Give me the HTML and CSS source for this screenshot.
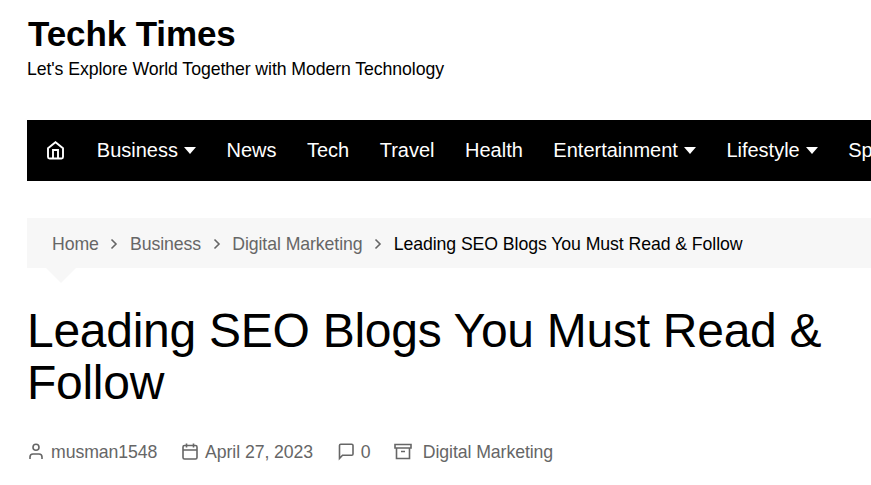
FILE: index.html
```html
<!DOCTYPE html>
<html lang="en">
<head>
<meta charset="utf-8">
<title>Techk Times</title>
<link rel="stylesheet" href="styles.css">
</head>
<body>
<header class="site-header">
  <div class="site-title">Techk Times</div>
  <div class="tagline">Let's Explore World Together with Modern Technology</div>
</header>
<nav class="main-nav">
  <a class="home"><svg width="20" height="20" viewBox="0 0 20 20"><path d="M2 7.200 9.500 1.200l7.500 6v8.800q0 1.500-1.500 1.500h-12q-1.500 0-1.500-1.500zM7 17V9h5v8"/></svg></a>
  <a>Business<i class="caret"></i></a>
  <a>News</a>
  <a>Tech</a>
  <a>Travel</a>
  <a>Health</a>
  <a>Entertainment<i class="caret"></i></a>
  <a>Lifestyle<i class="caret"></i></a>
  <a>Sports</a>
</nav>
<main>
  <div class="breadcrumb">
    <a>Home</a><svg class="sep" viewBox="0 0 8 12"><path d="m1.500 1.500 4.500 4.500-4.500 4.500"/></svg><a>Business</a><svg class="sep" viewBox="0 0 8 12"><path d="m1.500 1.500 4.500 4.500-4.500 4.500"/></svg><a>Digital Marketing</a><svg class="sep" viewBox="0 0 8 12"><path d="m1.500 1.500 4.500 4.500-4.500 4.500"/></svg><span>Leading SEO Blogs You Must Read &amp; Follow</span>
  </div>
  <h1>Leading SEO Blogs You Must Read &amp; Follow</h1>
  <div class="meta">
    <span class="author"><svg viewBox="0 0 18 18"><circle cx="9" cy="4.200" r="3"/><path d="M3 16v-2q0-3 3-3h6q3 0 3 3v2"/></svg>musman1548</span>
    <span class="date"><svg viewBox="0 0 18 18"><rect x="2" y="2.500" width="14" height="13.500" rx="1.500"/><path d="M2 7h14M5.500 .5v4M12.500 .5v4"/></svg>April 27, 2023</span>
    <span class="comments"><svg viewBox="0 0 18 18"><path d="M2.500 15.500V2.500q0-1.300 1.300-1.300h10.900q1.300 0 1.300 1.300v8.500q0 1.300-1.300 1.300H5.500z"/></svg>0</span>
    <span class="category"><svg viewBox="0 0 18 18"><path d="M1 1.500h16V5H1zM2.500 5v10.500h13V5M7 8.500h4"/></svg>Digital Marketing</span>
  </div>
</main>
</body>
</html>
```
FILE: styles.css
```css
* { box-sizing: border-box; }
body {
  margin: 0;
  padding: 14px 0 0 27px;
  height: 485px;
  overflow: hidden;
  background: #fff;
  color: #000;
  font-family: "Liberation Sans", Arial, sans-serif;
}
svg { fill: none; stroke: currentColor; flex: none; }
.site-header { height: 106px; }
.site-title { font-size: 35px; font-weight: 700; line-height: 40px; padding-left: 1px; letter-spacing: -0.1px; }
.tagline { font-size: 17.7px; line-height: 30px; letter-spacing: -0.085px; white-space: nowrap; }
.main-nav {
  display: flex;
  align-items: center;
  gap: 30.500px;
  height: 61px;
  padding-left: 19.300px;
  background: #000;
  color: #fff;
  font-size: 20px;
  white-space: nowrap;
  overflow: hidden;
}
.main-nav a { display: flex; align-items: center; flex: none; }
.home svg { stroke-width: 1.900; }
.caret {
  margin-left: 6px;
  border: 6px solid transparent;
  border-top: 7px solid #fff;
  border-bottom: 0;
}
.breadcrumb {
  position: relative;
  display: flex;
  align-items: center;
  height: 50px;
  margin-top: 37px;
  padding: 2px 0 0 25px;
  background: #f7f7f7;
  color: #666;
  font-size: 17.7px;
  letter-spacing: -0.08px;
  white-space: nowrap;
}
.breadcrumb::after {
  content: "";
  position: absolute;
  top: 100%;
  left: 19px;
  border: 15px solid transparent;
  border-top-color: #f7f7f7;
  border-bottom: 0;
}
.breadcrumb span { color: #000; }
.sep { width: 8px; height: 12px; margin: 0 11.600px 0 11.500px; stroke-width: 1.600; }
h1 { margin: 37px 0 0; font-size: 48px; font-weight: 400; line-height: 52px; letter-spacing: -0.27px; }
.meta { display: flex; align-items: center; height: 24px; margin-top: 31px; color: #666; font-size: 17.7px; letter-spacing: -0.08px; white-space: nowrap; }
.meta span { display: flex; align-items: center; }
.meta svg { width: 18px; height: 18px; margin-right: 6px; stroke-width: 1.600; }
.date, .comments, .category { margin-left: 23.700px; }
.meta .comments { margin-left: 24.200px; }
.comments svg { margin-right: 5.500px; }
.meta .category svg { margin-right: 10.500px; }
```
